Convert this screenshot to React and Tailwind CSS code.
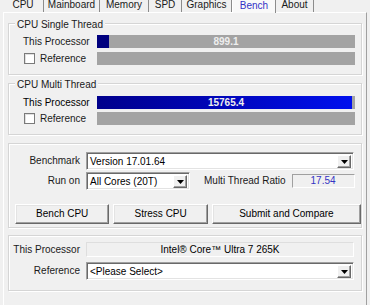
import React from 'react'

const tabs = [
  { name: 'CPU', w: 41 },
  { name: 'Mainboard', w: 56 },
  { name: 'Memory', w: 49 },
  { name: 'SPD', w: 33 },
  { name: 'Graphics', w: 50 },
  { name: 'Bench', w: 44, active: true },
  { name: 'About', w: 38 },
]

function Group({ title, className = '', children }) {
  return (
    <div className={`relative mx-[4px] border border-[#d5d5d5] shadow-[inset_1px_1px_0_#ffffff,1px_1px_0_#ffffff] ${className}`}>
      {title && (
        <div className="absolute left-[6px] top-[-5px] whitespace-nowrap bg-[#f0f0f0] px-[2px] leading-[11px] text-[#1a1a1a]">
          {title}
        </div>
      )}
      {children}
    </div>
  )
}

function Bar({ value, pct, multi }) {
  return (
    <div className="relative h-[13px] w-[258px] bg-[#a3a3a3]">
      {pct > 0 && (
        <div
          className={`absolute left-0 top-0 h-full ${multi ? 'bg-gradient-to-r from-[#00008c] to-[#0010ee]' : 'bg-[#00007e]'}`}
          style={{ width: `${pct}%` }}
        />
      )}
      {value && (
        <div className="absolute inset-0 flex items-center justify-center text-[10px] font-bold leading-none text-[#eeeeee]">
          {value}
        </div>
      )}
    </div>
  )
}

function Checkbox() {
  return <div className="h-[11px] w-[11px] shrink-0 border border-[#7a7a7a] bg-white shadow-[inset_1px_1px_0_#e0e0e0]" />
}

function Arrow() {
  return (
    <div className="flex h-full w-[14px] items-center justify-center border border-t-white border-l-white border-r-[#696969] border-b-[#696969] bg-[#f0f0f0] shadow-[inset_-1px_-1px_0_#a0a0a0]">
      <svg width="7" height="4" viewBox="0 0 7 4"><path d="M0 0h7L3.5 4z" fill="#000" /></svg>
    </div>
  )
}

function Select({ text, w }) {
  return (
    <div
      className="flex h-[18px] items-stretch border border-t-[#a0a0a0] border-l-[#a0a0a0] border-r-white border-b-white bg-white shadow-[inset_1px_1px_0_#696969,inset_-1px_-1px_0_#e3e3e3] pr-[2px] pt-[2px] pb-[1px] pl-[2px]"
      style={{ width: w }}
    >
      <div className="flex flex-1 items-center whitespace-nowrap pl-[1px] leading-none text-black">{text}</div>
      <Arrow />
    </div>
  )
}

function Button({ children, w }) {
  return (
    <div
      className="flex h-[20px] items-center justify-center whitespace-nowrap border border-t-white border-l-white border-r-[#696969] border-b-[#696969] bg-[#f0f0f0] shadow-[inset_-1px_-1px_0_#a0a0a0,inset_1px_1px_0_#e3e3e3] leading-none text-black"
      style={{ width: w }}
    >
      {children}
    </div>
  )
}

export default function App() {
  return (
    <div className="h-[305px] w-[370px] overflow-hidden bg-[#f0f0f0] font-['Liberation_Sans',Arial,sans-serif] text-[10px] text-[#1a1a1a]">
      {/* tabs */}
      <div className="flex h-[12px] pl-[3px]">
        {tabs.map((t) => (
          <div
            key={t.name}
            className={`flex h-[12px] items-end justify-center whitespace-nowrap border-r border-[#8c8c8c] leading-[10px] ${t.active ? 'h-[13px] border-l border-l-white bg-[#f9f9f9] text-[#3131c6]' : ''}`}
            style={{ width: t.w }}
          >
            <span className="mb-[2px]">{t.name}</span>
          </div>
        ))}
      </div>

      {/* panel */}
      <div className="mx-[3px] h-[300px] border border-t-white border-l-white border-r-[#a0a0a0] border-b-[#a0a0a0] pt-[10px]">
        <Group title="CPU Single Thread" className="h-[52px] pt-[11px]">
          <div className="flex items-center">
            <div className="w-[88px] whitespace-nowrap pl-[14px] leading-none">This Processor</div>
            <Bar value="899.1" pct={4.5} />
          </div>
          <div className="mt-[4px] flex items-center">
            <div className="flex w-[88px] items-center gap-[5px] whitespace-nowrap pl-[15px] leading-none">
              <Checkbox />
              <span>Reference</span>
            </div>
            <Bar />
          </div>
        </Group>

        <Group title="CPU Multi Thread" className="mt-[8px] h-[52px] pt-[12px]">
          <div className="flex items-center">
            <div className="w-[88px] whitespace-nowrap pl-[14px] leading-none text-black">This Processor</div>
            <Bar value="15765.4" pct={99} multi />
          </div>
          <div className="mt-[3px] flex items-center">
            <div className="flex w-[88px] items-center gap-[5px] whitespace-nowrap pl-[15px] leading-none">
              <Checkbox />
              <span>Reference</span>
            </div>
            <Bar />
          </div>
        </Group>

        <Group className="mt-[8px] h-[85px] pt-[8px]">
          <div className="flex items-center">
            <div className="w-[77px] whitespace-nowrap pr-[6px] text-right leading-none">Benchmark</div>
            <Select text="Version 17.01.64" w={268} />
          </div>
          <div className="mt-[2px] flex items-center">
            <div className="w-[77px] whitespace-nowrap pr-[6px] text-right leading-none">Run on</div>
            <Select text="All Cores (20T)" w={104} />
            <div className="ml-[14px] whitespace-nowrap leading-none">Multi Thread Ratio</div>
            <div className="ml-[6px] flex h-[14px] w-[63px] items-center justify-center border border-t-[#a0a0a0] border-l-[#a0a0a0] border-r-white border-b-white leading-none text-[#3434c4]">
              17.54
            </div>
          </div>
          <div className="mt-[14px] flex gap-[4px] pl-[6px]">
            <Button w={95}>Bench CPU</Button>
            <Button w={95}>Stress CPU</Button>
            <Button w={150}>Submit and Compare</Button>
          </div>
        </Group>

        <Group className="mt-[7px] h-[56px] pt-[6px]">
          <div className="flex items-center">
            <div className="w-[77px] whitespace-nowrap pr-[6px] text-right leading-none">This Processor</div>
            <div className="flex h-[15px] w-[268px] items-center justify-center whitespace-nowrap border border-[#dedede] border-b-white border-r-white leading-none text-black">
              Intel® Core™ Ultra 7 265K
            </div>
          </div>
          <div className="mt-[5px] flex items-center">
            <div className="w-[77px] whitespace-nowrap pr-[6px] text-right leading-none">Reference</div>
            <Select text="<Please Select>" w={268} />
          </div>
        </Group>
      </div>
    </div>
  )
}
